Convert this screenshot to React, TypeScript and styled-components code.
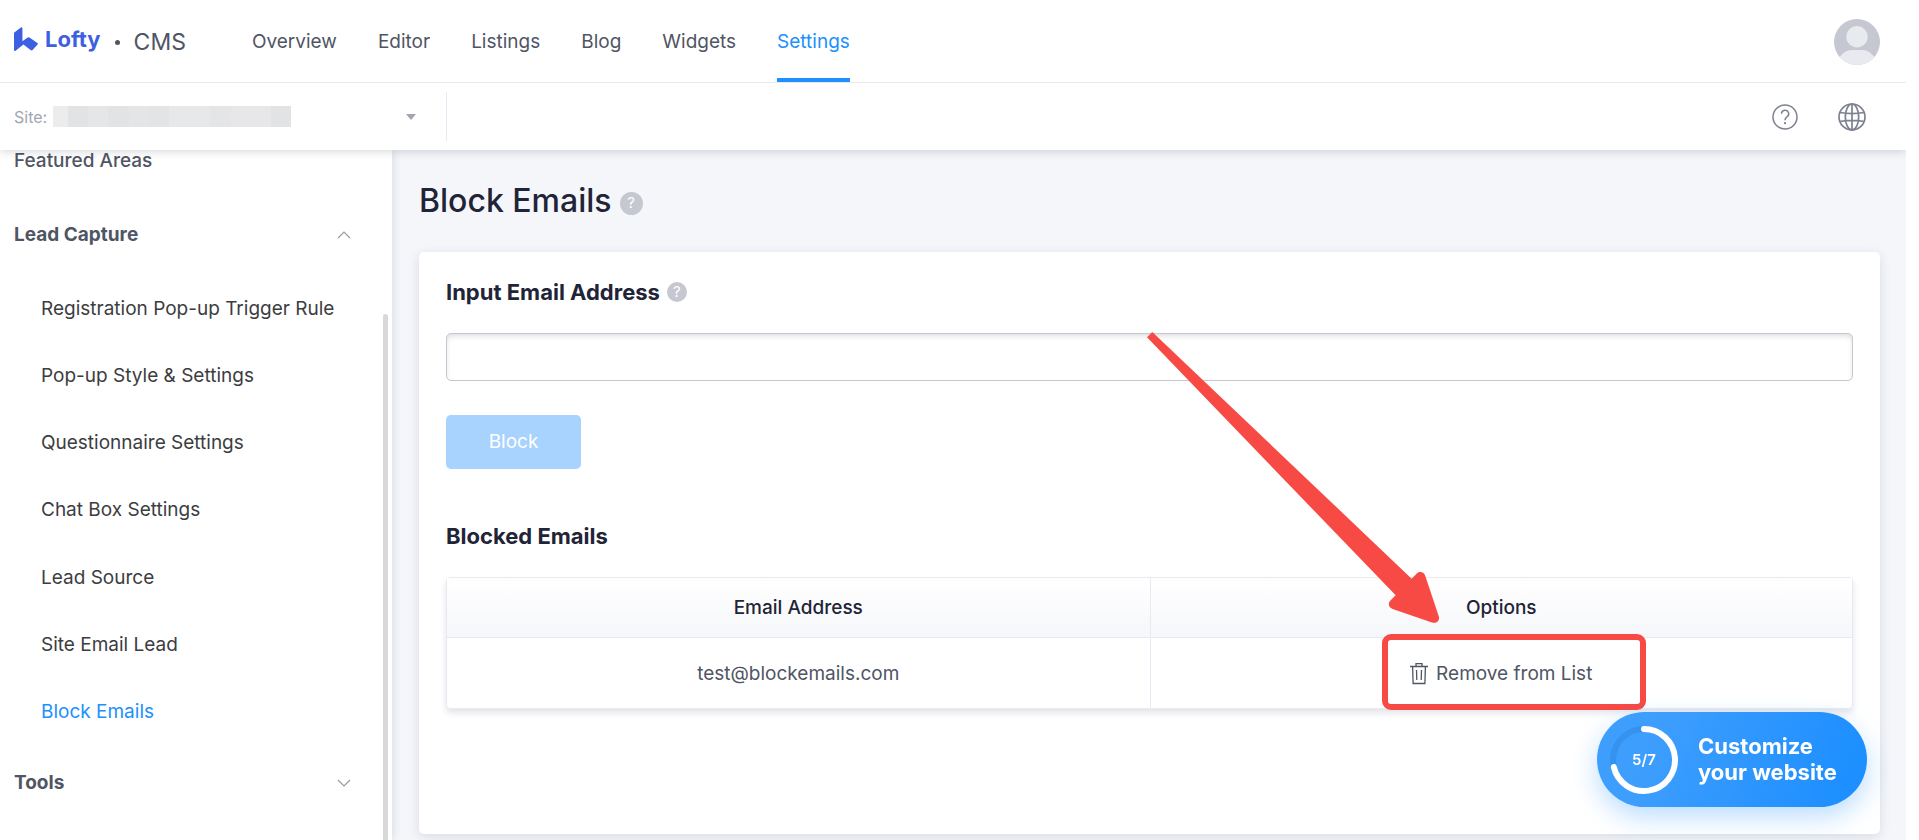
import React from 'react';
import styled, { createGlobalStyle, css } from 'styled-components';

const color = {
  blue: '#2090fc',
  ink: '#1f2437',
  text: '#505564',
  menu: '#3c3d41',
  muted: '#a3a5b3',
  grey: '#c6c8d1',
  line: '#e8e9f2',
  canvas: '#f4f6fa',
  mark: '#f74a45',
};

const GlobalStyle = createGlobalStyle`
  *, *::before, *::after { box-sizing: border-box; }
  body {
    margin: 0;
    background: #fff;
    color: ${color.text};
    font-family: Inter, "Liberation Sans", sans-serif;
    font-size: 19px;
    line-height: 22px;
  }
  button, input, select { font: inherit; color: inherit; }
  h1, h2, ul { margin: 0; padding: 0; }
  ul { list-style: none; }
  a { color: inherit; text-decoration: none; }
`;

const Page = styled.div`
  display: flex;
  flex-direction: column;
  min-height: 100vh;
  padding-right: 13px;
`;

const TopBar = styled.header`
  display: flex;
  align-items: center;
  height: 83px;
  padding: 2px 26px 0 14px;
  border-bottom: 1px solid ${color.line};
`;

const Brand = styled.a`
  display: flex;
  align-items: center;
  gap: 7px;
  padding-bottom: 6px;
  color: #3d5fe2;
  font-size: 22px;
  font-weight: 700;
`;

const Dot = styled.span`
  width: 5px;
  height: 5px;
  margin: 0 14px;
  border-radius: 50%;
  background: ${color.text};
`;

const Product = styled.span`
  font-size: 23px;
  color: ${color.text};
`;

const TopNav = styled.nav`
  display: flex;
  flex: 1;
  align-self: stretch;
  gap: 41px;
  margin-left: 66px;
`;

const TopLink = styled.a<{ $active?: boolean }>`
  display: flex;
  align-items: center;
  border-top: 4px solid transparent;
  border-bottom: 4px solid ${(p) => (p.$active ? color.blue : 'transparent')};
  color: ${(p) => (p.$active ? color.blue : color.text)};
`;

const IconButton = styled.button`
  display: flex;
  padding: 0;
  border: 0;
  background: none;
  color: #7d8190;
  cursor: pointer;
`;

const SiteBar = styled.div`
  position: relative;
  z-index: 2;
  display: flex;
  align-items: center;
  height: 67px;
  padding: 0 40px 0 14px;
  background: #fff;
  box-shadow: 0 1px 9px rgba(30, 36, 60, 0.2);
  clip-path: inset(0 0 -16px 0);
`;

const SitePicker = styled.label`
  display: flex;
  align-items: center;
  gap: 6px;
  width: 433px;
  height: 49px;
  padding-right: 30px;
  border-right: 1px solid ${color.line};
  color: ${color.muted};
  font-size: 16px;
`;

const SiteSelect = styled.select`
  flex: 1;
  height: 21px;
  border: 0;
  appearance: none;
  background: linear-gradient(
      90deg,
      #ececec 15px, #e2e3e5 15px 35px, #e5e6e8 35px 55px, #e2e3e5 55px 76px,
      #e4e5e7 76px 96px, #e3e4e6 96px 116px, #e7e8e9 116px 157px,
      #e4e5e7 157px 178px, #e7e7e9 178px 218px, #e2e3e5 218px
    )
    left center / 238px 21px no-repeat;
`;

const BarActions = styled.div`
  display: flex;
  align-items: center;
  gap: 40px;
  margin-left: auto;
`;

const Body = styled.div`
  display: flex;
  flex: 1;
`;

const Sidebar = styled.aside`
  position: relative;
  z-index: 1;
  flex: none;
  width: 392px;
  background: #fff;
  box-shadow: 0 0 9px rgba(30, 36, 60, 0.16);
`;

const ScrollThumb = styled.span`
  position: absolute;
  top: 164px;
  right: 4px;
  bottom: 0;
  width: 5px;
  border-radius: 3px 3px 0 0;
  background: #d8d8d8;
`;

const PlainEntry = styled.a`
  display: block;
  height: 48px;
  padding-left: 14px;
  font-weight: 500;
`;

const GroupHeading = styled.button`
  display: flex;
  align-items: center;
  justify-content: space-between;
  width: 100%;
  height: 74px;
  padding: 0 41px 0 14px;
  border: 0;
  background: none;
  font-weight: 700;
  cursor: pointer;
`;

const SubMenu = styled.ul`
  display: grid;
  grid-auto-rows: 1fr;
  min-height: 474px;
  padding-top: 3px;
`;

const SubItem = styled.a<{ $active?: boolean }>`
  display: flex;
  align-items: center;
  height: 100%;
  padding-left: 41px;
  color: ${(p) => (p.$active ? color.blue : color.menu)};
`;

const Main = styled.main`
  display: flex;
  flex: 1;
  flex-direction: column;
  gap: 31px;
  min-width: 0;
  padding: 31px 26px 6px 27px;
  background: ${color.canvas};
`;

const TitleRow = styled.div`
  display: flex;
  align-items: center;
  gap: 8px;
`;

const Title = styled.h1`
  color: ${color.ink};
  font-size: 32px;
  font-weight: 500;
  line-height: 40px;
`;

const HelpBadge = styled.button<{ $large?: boolean }>`
  width: ${(p) => (p.$large ? 23 : 20)}px;
  height: ${(p) => (p.$large ? 23 : 20)}px;
  margin-top: ${(p) => (p.$large ? 4 : 0)}px;
  padding: 0;
  border: 0;
  border-radius: 50%;
  background: ${color.grey};
  color: #fff;
  font-size: 15px;
  line-height: 20px;
  text-align: center;
  cursor: pointer;
`;

const Card = styled.section`
  display: flex;
  flex: 1;
  flex-direction: column;
  align-items: stretch;
  padding: 27px;
  border-radius: 5px;
  background: #fff;
  box-shadow: 0 3px 12px rgba(30, 36, 70, 0.12);
`;

const headingText = css`
  color: ${color.ink};
  font-size: 22px;
  font-weight: 700;
  line-height: 26px;
`;

const LabelRow = styled.div`
  display: flex;
  align-items: center;
  gap: 7px;
`;

const FieldLabel = styled.label`
  ${headingText}
`;

const SectionTitle = styled.h2`
  ${headingText}
  margin: 54px 0 28px;
`;

const EmailInput = styled.input`
  width: 100%;
  height: 48px;
  margin: 28px 0 34px;
  padding: 0 14px;
  border: 1px solid ${color.grey};
  border-radius: 5px;
  background: #fff;
  box-shadow: inset 0 3px 6px -2px rgba(30, 36, 60, 0.2);
`;

const BlockButton = styled.button`
  align-self: flex-start;
  width: 135px;
  height: 54px;
  border: 0;
  border-radius: 5px;
  background: #a8d3ff;
  color: #fff;
`;

const Table = styled.table`
  width: 100%;
  table-layout: fixed;
  border: 1px solid ${color.line};
  border-radius: 4px;
  border-collapse: separate;
  border-spacing: 0;
  box-shadow: 0 4px 6px rgba(30, 36, 70, 0.12);
  text-align: center;
`;

const HeadCell = styled.th`
  height: 60px;
  padding: 0;
  border-bottom: 1px solid ${color.line};
  background: linear-gradient(#fff, #f6f7fa);
  color: ${color.ink};
  font-weight: 500;

  & + & { border-left: 1px solid ${color.line}; }
`;

const Cell = styled.td`
  height: 70px;
  padding: 2px 0 0;

  & + & { border-left: 1px solid ${color.line}; }
`;

const RowAction = styled.div`
  position: relative;
  display: inline-block;
  vertical-align: middle;
`;

const RemoveButton = styled.button`
  display: flex;
  align-items: center;
  gap: 8px;
  padding: 0;
  border: 0;
  background: none;
  cursor: pointer;
`;

const HighlightBox = styled.span`
  position: absolute;
  top: -29px;
  left: -28px;
  width: 264px;
  height: 76px;
  border: 6px solid ${color.mark};
  border-radius: 9px;
  pointer-events: none;
`;

const ArrowMark = styled.svg`
  position: absolute;
  top: -332px;
  left: -264px;
  width: 294px;
  height: 293px;
  pointer-events: none;
`;

const Progress = styled.button`
  position: fixed;
  right: 52px;
  bottom: 33px;
  z-index: 3;
  display: flex;
  align-items: center;
  gap: 19px;
  width: 270px;
  height: 95px;
  padding: 0 12px;
  border: 0;
  border-radius: 48px;
  background: linear-gradient(110deg, #3e9efd 20%, #1e8fff 90%);
  box-shadow: 0 10px 26px rgba(32, 144, 255, 0.3);
  color: #fff;
  font-size: 22px;
  font-weight: 700;
  line-height: 26px;
  text-align: left;
  cursor: pointer;
`;

const ProgressText = styled.span`
  padding-bottom: 2px;
`;

const Ring = styled.span`
  display: grid;
  flex: none;
  place-items: center;
  width: 70px;
  height: 70px;
  font-size: 15px;
  font-weight: 600;

  > * { grid-area: 1 / 1; }
`;

const Chevron = ({ up }: { up?: boolean }) => (
  <svg width="14" height="8" viewBox="0 0 14 8" fill="none" stroke="#9a9ba1" strokeWidth="1.2">
    <path d={up ? 'M1 7 7 1l6 6' : 'M1 1l6 6 6-6'} />
  </svg>
);

const LogoMark = () => (
  <svg width="24" height="24" viewBox="0 0 74 74" fill="#3d5fe2" aria-hidden="true">
    <path d="M0 18 20 2Q26-2 26 5V44L41 33Q45 30 49 33L74 51Q74 54 58 70Q55 74 51 71L29 54 5 73Q0 76 0 70z" />
  </svg>
);

const AvatarIcon = () => (
  <svg width="46" height="46" viewBox="0 0 46 46">
    <clipPath id="face"><circle cx="23" cy="23" r="23" /></clipPath>
    <g clipPath="url(#face)">
      <rect width="46" height="46" fill="#c5c7d1" />
      <circle cx="23" cy="17.700" r="10.700" fill="#e9eaf0" />
      <path d="M2 46c2-9 9-15 16-15h10c7 0 14 6 16 15z" fill="#e9eaf0" />
    </g>
  </svg>
);

const QuestionIcon = () => (
  <svg width="26" height="26" viewBox="0 0 26 26" fill="none" stroke="currentColor" strokeWidth="1.500">
    <circle cx="13" cy="13" r="12" />
    <path d="M9.500 9.800a3.600 3.600 0 1 1 5.400 3.100c-1.300.8-1.900 1.400-1.900 3.300" />
    <circle cx="13" cy="19.200" r="1.100" fill="currentColor" stroke="none" />
  </svg>
);

const GlobeIcon = () => (
  <svg width="28" height="28" viewBox="0 0 28 28" fill="none" stroke="currentColor" strokeWidth="1.700">
    <circle cx="14" cy="14" r="13" />
    <ellipse cx="14" cy="14" rx="6.700" ry="13" />
    <path d="M14 1v26M2 9.500c7 1.300 17 1.300 24 0M2 18.500c7-1.300 17-1.300 24 0" />
  </svg>
);

const TrashIcon = () => (
  <svg width="18" height="22" viewBox="0 0 18 22" fill="none" stroke="currentColor" strokeWidth="1.300">
    <path d="M0 3.500h18M6 3.500V.6h6v2.900M2.600 3.500l.5 17h11.800l.5-17M6.500 7l.3 10M11.500 7l-.3 10" />
  </svg>
);

const topLinks = ['Overview', 'Editor', 'Listings', 'Blog', 'Widgets', 'Settings'];
const captureItems = [
  'Registration Pop-up Trigger Rule',
  'Pop-up Style & Settings',
  'Questionnaire Settings',
  'Chat Box Settings',
  'Lead Source',
  'Site Email Lead',
  'Block Emails',
];
const blockedEmails = ['test@blockemails.com'];

export default function App() {
  return (
    <Page>
      <GlobalStyle />
      <TopBar>
        <Brand href="#"><LogoMark />Lofty</Brand>
        <Dot />
        <Product>CMS</Product>
        <TopNav>
          {topLinks.map((name) => (
            <TopLink key={name} href="#" $active={name === 'Settings'}>{name}</TopLink>
          ))}
        </TopNav>
        <IconButton aria-label="Account"><AvatarIcon /></IconButton>
      </TopBar>

      <SiteBar>
        <SitePicker>
          Site:
          <SiteSelect><option value="" /></SiteSelect>
          <svg width="10" height="6" viewBox="0 0 10 6" fill={color.muted}><path d="M0 0h10L5 6z" /></svg>
        </SitePicker>
        <BarActions>
          <IconButton aria-label="Help"><QuestionIcon /></IconButton>
          <IconButton aria-label="Language"><GlobeIcon /></IconButton>
        </BarActions>
      </SiteBar>

      <Body>
        <Sidebar>
          <PlainEntry href="#">Featured Areas</PlainEntry>
          <GroupHeading aria-expanded="true">Lead Capture<Chevron up /></GroupHeading>
          <SubMenu>
            {captureItems.map((name) => (
              <li key={name}>
                <SubItem href="#" $active={name === 'Block Emails'}>{name}</SubItem>
              </li>
            ))}
          </SubMenu>
          <GroupHeading aria-expanded="false">Tools<Chevron /></GroupHeading>
          <ScrollThumb />
        </Sidebar>

        <Main>
          <TitleRow>
            <Title>Block Emails</Title>
            <HelpBadge $large>?</HelpBadge>
          </TitleRow>
          <Card>
            <LabelRow>
              <FieldLabel htmlFor="email">Input Email Address</FieldLabel>
              <HelpBadge>?</HelpBadge>
            </LabelRow>
            <EmailInput id="email" type="email" />
            <BlockButton disabled>Block</BlockButton>

            <SectionTitle>Blocked Emails</SectionTitle>
            <Table>
              <thead>
                <tr><HeadCell>Email Address</HeadCell><HeadCell>Options</HeadCell></tr>
              </thead>
              <tbody>
                {blockedEmails.map((email) => (
                  <tr key={email}>
                    <Cell>{email}</Cell>
                    <Cell>
                      <RowAction>
                        <RemoveButton><TrashIcon />Remove from List</RemoveButton>
                        <HighlightBox />
                        <ArrowMark viewBox="78 93 882 879" fill={color.mark}>
                          <path d="M81 112 97 96 875 836 889 822C898 812 912 815 916 828L956 948C960 960 952 971 938 968L818 927C805 922 803 910 812 901L827 886Z" />
                        </ArrowMark>
                      </RowAction>
                    </Cell>
                  </tr>
                ))}
              </tbody>
            </Table>
          </Card>
        </Main>
      </Body>

      <Progress>
        <Ring>
          <svg width="70" height="70" viewBox="0 0 70 70" fill="none" strokeWidth="6">
            <circle cx="35" cy="35" r="31" stroke="#3592ef" />
            <path d="M35 4A31 31 0 1 1 4.800 42" stroke="#fff" strokeLinecap="round" />
          </svg>
          <span>5/7</span>
        </Ring>
        <ProgressText>Customize<br />your website</ProgressText>
      </Progress>
    </Page>
  );
}
